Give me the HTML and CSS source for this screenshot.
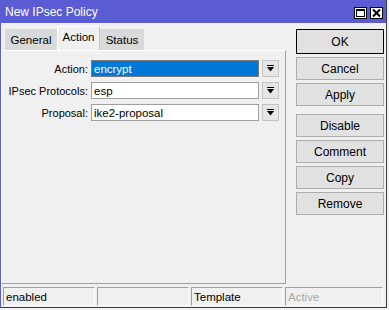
FILE: index.html
```html
<!DOCTYPE html>
<html lang="en">
<head>
    <meta charset="UTF-8">
    <meta name="viewport" content="width=device-width, initial-scale=1.0">
    <title>New IPsec Policy</title>
    <link rel="stylesheet" href="styles.css">
</head>
<body>

<div class="window">
    <div class="titlebar">
        <span class="title">New IPsec Policy</span>
        <div class="title-btns">
            <span class="tbtn">
                <svg width="11" height="10" viewBox="0 0 11 10"><rect x="1.5" y="1.5" width="8" height="7" fill="none" stroke="#000" stroke-width="1"/><rect x="1" y="1" width="9" height="2" fill="#000"/></svg>
            </span>
            <span class="tbtn">
                <svg width="11" height="10" viewBox="0 0 11 10"><path d="M2 1.5 L9 8.5 M9 1.5 L2 8.5" stroke="#000" stroke-width="2"/></svg>
            </span>
        </div>
    </div>

    <div class="main">
        <div class="left">
            <div class="tabs">
                <div class="tab tab-general">General</div>
                <div class="tab tab-action active">Action</div>
                <div class="tab tab-status">Status</div>
            </div>
            <div class="panel">
                <div class="row">
                    <label>Action:</label>
                    <div class="field selected"><span>encrypt</span></div>
                    <span class="drop"><svg width="7" height="7" viewBox="0 0 7 7"><rect x="0" y="0" width="7" height="1" fill="#000"/><polygon points="0,2 7,2 3.5,6.5" fill="#000"/></svg></span>
                </div>
                <div class="row">
                    <label>IPsec Protocols:</label>
                    <div class="field"><span>esp</span></div>
                    <span class="drop"><svg width="7" height="7" viewBox="0 0 7 7"><rect x="0" y="0" width="7" height="1" fill="#000"/><polygon points="0,2 7,2 3.5,6.5" fill="#000"/></svg></span>
                </div>
                <div class="row">
                    <label>Proposal:</label>
                    <div class="field"><span>ike2-proposal</span></div>
                    <span class="drop"><svg width="7" height="7" viewBox="0 0 7 7"><rect x="0" y="0" width="7" height="1" fill="#000"/><polygon points="0,2 7,2 3.5,6.5" fill="#000"/></svg></span>
                </div>
            </div>
        </div>

        <div class="actions">
            <button class="btn default">OK</button>
            <button class="btn">Cancel</button>
            <button class="btn">Apply</button>
            <button class="btn sep">Disable</button>
            <button class="btn">Comment</button>
            <button class="btn">Copy</button>
            <button class="btn">Remove</button>
        </div>
    </div>

    <div class="statusbar">
        <div class="seg">enabled</div>
        <div class="seg"></div>
        <div class="seg">Template</div>
        <div class="seg seg-last muted">Active</div>
    </div>
</div>

</body>
</html>
```

FILE: styles.css
```css
body {
    margin: 0;
    background-color: #f4f4f4;
    font-family: "Liberation Sans", Arial, sans-serif;
    font-size: 11px;
    color: #000;
}

.window {
    box-sizing: border-box;
    width: 387px;
    height: 308px;
    background: #f0f0f0;
    border: 1px solid #5b5bd4;
    border-right-color: #3c3c3c;
    border-bottom-color: #3c3c3c;
    display: flex;
    flex-direction: column;
}

.titlebar {
    height: 22px;
    background: #5b5bd4;
    display: flex;
    align-items: center;
    justify-content: space-between;
    padding: 0 3px 0 4px;
}

.title {
    color: #fff;
    font-size: 12px;
}

.title-btns {
    display: flex;
    gap: 3px;
    margin-top: 2px;
}

.tbtn {
    box-sizing: border-box;
    width: 13px;
    height: 12px;
    background: #fff;
    border: 1px solid #000;
    display: flex;
    align-items: center;
    justify-content: center;
}

.tbtn svg {
    display: block;
}

.main {
    display: flex;
    flex: 1;
}

.left {
    width: 285px;
    display: flex;
    flex-direction: column;
    padding-top: 3px;
}

.tabs {
    display: flex;
    align-items: flex-end;
    height: 24px;
    padding-left: 4px;
}

.tab {
    box-sizing: border-box;
    height: 21px;
    background: #d9d9d9;
    display: flex;
    align-items: center;
    justify-content: center;
    font-size: 11.5px;
}

.tab-general {
    width: 52px;
}

.tab-action {
    width: 43px;
}

.tab-status {
    width: 44px;
}

.tab.active {
    height: 24px;
    background: #f0f0f0;
    border-left: 1px solid #fff;
    border-right: 1px solid #c8c8c8;
    border-top: 1px solid #fff;
    padding-bottom: 3px;
}

.panel {
    box-sizing: border-box;
    height: 234px;
    border: 1px solid #a0a0a0;
    border-top-color: #fff;
    border-left-color: #fff;
    padding-top: 9px;
}

.row {
    display: flex;
    align-items: center;
    height: 17px;
    margin-bottom: 5px;
}

.row label {
    width: 86px;
    text-align: right;
    margin-right: 3px;
    font-size: 11px;
}

.field {
    box-sizing: border-box;
    width: 168px;
    height: 17px;
    background: #fff;
    border: 1px solid #a0a0a0;
    display: flex;
    align-items: center;
    padding-left: 1px;
    font-size: 11.5px;
}

.field span {
    padding: 0 1px;
}

.field.selected {
    background: #0078d7;
    border-color: #7a7a7a;
    color: #fff;
}

.drop {
    box-sizing: border-box;
    width: 17px;
    height: 17px;
    margin-left: 3px;
    background: #e6e6e6;
    border: 1px solid #c4c4c4;
    display: flex;
    align-items: center;
    justify-content: center;
}

.drop svg {
    display: block;
}

.actions {
    display: flex;
    flex-direction: column;
    gap: 3px;
    padding: 6px 2px 0 10px;
}

.btn {
    box-sizing: border-box;
    width: 88px;
    height: 23px;
    background: #e1e1e1;
    border: 1px solid #adadad;
    font-family: "Liberation Sans", Arial, sans-serif;
    font-size: 12px;
    color: #000;
    padding: 0;
}

.btn.default {
    height: 25px;
    border-color: #000;
}

.btn.sep {
    margin-top: 5px;
}

.statusbar {
    display: flex;
    gap: 2px;
    height: 20px;
    padding: 3px 3px 0 2px;
}

.seg {
    box-sizing: border-box;
    width: 92px;
    height: 19px;
    border: 1px solid #fff;
    border-top-color: #a0a0a0;
    border-left-color: #a0a0a0;
    padding-left: 2px;
    display: flex;
    align-items: center;
    font-size: 11.5px;
}

.seg-last {
    flex: 1;
}

.muted {
    color: #a8a8a8;
}
```
